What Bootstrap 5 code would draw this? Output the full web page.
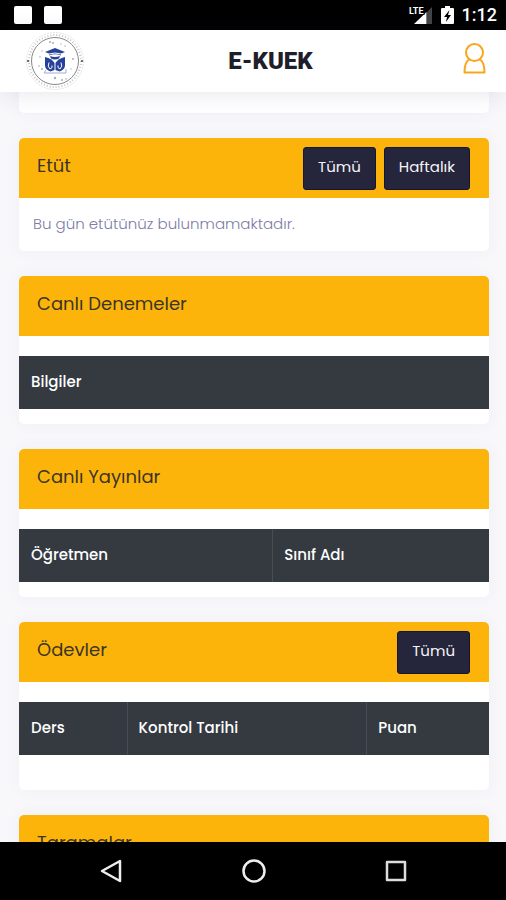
<!DOCTYPE html>
<html lang="tr">
<head>
<meta charset="utf-8">
<meta name="viewport" content="width=device-width, initial-scale=1">
<title>E-KUEK</title>
<link href="https://cdn.jsdelivr.net/npm/bootstrap@5.3.0/dist/css/bootstrap.min.css" rel="stylesheet">
<style>
  body { font-family: Poppins, Inter, "Noto Sans", sans-serif; background: #f8f8fb; color: #24243a; }
  .status-bar { height: 30px; padding: 0 9px 0 14px; font: 500 18px/30px Roboto, sans-serif; }
  .notice-square { width: 18px; height: 18px; border-radius: 2px; background: #fff; }
  .app-header { height: 62px; padding: 0 20px 0 25px; box-shadow: 0 2px 22px rgba(60, 60, 110, .12); z-index: 2; }
  .brand-title { font: 900 24px/30px Roboto, sans-serif; color: #1f1f2b; }
  .brand-slot { width: 90px; }
  .profile-slot { width: 60px; padding-bottom: 6px; }
  .feed { min-height: 0; padding: 0 17px 0 19px; gap: 25px; }
  .panel { border: 0; border-radius: 5px; flex-shrink: 0; box-shadow: 0 0 16px rgba(80, 80, 130, .05); }
  .panel-tail { height: 21px; border-radius: 0 0 5px 5px; }
  .panel-head { height: 60px; padding: 0 19px 0 18px; gap: 8px; border-radius: 5px 5px 0 0; background: #fcb40a; }
  .panel-title { font-size: 18px; line-height: 24px; font-weight: 400; color: #3b3527; padding-bottom: 4px; }
  .panel-note { padding: 13px 14px 15px; font-size: 15px; line-height: 25px; font-weight: 300; color: #7c7ca8; }
  .btn-ink { --bs-btn-color: #f4f4f8; --bs-btn-bg: #25253b; --bs-btn-border-color: #15162f; --bs-btn-hover-color: #fff; --bs-btn-hover-bg: #34344e;
    --bs-btn-padding-x: 14px; --bs-btn-font-size: 15px; --bs-btn-line-height: 23px; --bs-btn-border-radius: 3px; padding-top: 7px; padding-bottom: 11px; }
  .grid-block { padding: 20px 0 15px; }
  .grid-block.roomy { padding-bottom: 35px; }
  .grid-table { table-layout: fixed; }
  .grid-table th { height: 53px; padding: 0 11px 2px 12px; background: #343a40; color: #fff; font-size: 15px; line-height: 22px; font-weight: 500; border: 0; vertical-align: middle; }
  .grid-table th + th { border-left: 1px solid #454d55; padding-left: 11px; }
  .w-first { width: 54%; } .w-ders { width: 23%; } .w-date { width: 51%; }
  .system-nav { height: 58px; padding: 0 39px 0 41px; }
  .system-nav .btn { line-height: 0; }
</style>
<script src="https://cdn.jsdelivr.net/npm/bootstrap@5.3.0/dist/js/bootstrap.bundle.min.js"></script>
</head>
<body class="vh-100 d-flex flex-column overflow-hidden">

<div class="status-bar bg-black text-white d-flex align-items-center justify-content-between flex-shrink-0">
  <div class="d-flex gap-2">
    <span class="notice-square me-1"></span><span class="notice-square"></span>
  </div>
  <div class="d-flex align-items-center">
    <svg class="me-2" width="24" height="20" viewBox="0 0 24 20" role="img" aria-label="LTE">
      <path d="M23 2v17h-5V7z" fill="#444"/><path d="M5 19L17.500 7v12z" fill="#fff"/>
      <text x="0" y="9" font-family="Roboto" font-size="9" font-weight="700" fill="#fff" stroke="#000" stroke-width="2" paint-order="stroke">LTE</text>
    </svg>
    <svg class="me-2" width="13" height="20" viewBox="0 0 13 20" aria-hidden="true">
      <path d="M4 1h5v2h3q1 0 1 1v14q0 1-1 1H1q-1 0-1-1V4q0-1 1-1h3z" fill="#fff"/>
      <path d="M8.500 5L3 12h3l-1 5 5-7H7z" fill="#000"/>
    </svg>
    <span>1:12</span>
  </div>
</div>

<header class="app-header bg-white position-relative d-flex align-items-center justify-content-between flex-shrink-0">
  <a href="#" class="brand-slot d-flex" aria-label="Ana sayfa">
    <svg width="60" height="60" viewBox="0 0 60 60" aria-hidden="true">
      <g fill="none">
        <circle cx="30" cy="30" r="28.500" stroke="#e2e2e2" stroke-width="1" stroke-dasharray="2 1"/>
        <circle cx="30" cy="30" r="26" stroke="#c4c4c4" stroke-width="2" stroke-dasharray="1 2"/>
        <circle cx="30" cy="30" r="23.500" stroke="#888" stroke-width="1"/>
      </g>
      <g fill="#444"><circle cx="3" cy="30" r="1"/><circle cx="57" cy="30" r="1"/></g>
      <g fill="#a5abb8">
        <circle cx="25" cy="11" r="1"/><circle cx="28" cy="12" r="1"/><circle cx="36" cy="13" r=".7"/><circle cx="40" cy="15" r=".7"/>
        <circle cx="17" cy="20" r=".7"/><circle cx="15" cy="26" r=".8"/><circle cx="14" cy="35" r=".8"/><circle cx="17" cy="38" r="1"/>
        <circle cx="48" cy="28" r="1"/><circle cx="46" cy="38" r=".7"/><circle cx="30" cy="47" r="1.200"/><circle cx="37" cy="49" r="1"/><circle cx="41" cy="48" r=".8"/>
      </g>
      <g fill="#26419c">
        <path d="M30 17l10 4-4 1.500v2q-6-2.500-12 0v-2L20 21z"/>
        <path d="M25 25q5 2 10 0l-1 2.500q-4 2-8 0z"/>
        <path d="M20 26q7 1.500 9.500 6v7l-4 1.500q-5-1.500-5.500-6z"/>
        <path d="M40 26q-7 1.500-9.500 6v7l4 1.500q5-1.500 5.500-6z"/>
      </g>
      <g fill="none" stroke="#fff" stroke-width="1">
        <path d="M24 31.500q-2 4 1 6.500 3-1 2-3.500M36 31.500q2 4-1 6.500-3-1-2-3.500M24 23q6-2 12 0"/>
      </g>
      <path d="M19 42h22M21 39l-2 3M41 38v4" stroke="#a3accb" fill="none"/>
    </svg>
  </a>
  <h1 class="brand-title m-0">E-KUEK</h1>
  <div class="profile-slot d-flex justify-content-end">
    <button type="button" class="btn border-0 p-0 d-flex" aria-label="Profil">
      <svg width="23" height="31" viewBox="0 0 23 31" fill="none" stroke="#faa61a" stroke-width="2" stroke-linejoin="round" aria-hidden="true">
        <circle cx="11.500" cy="9.500" r="8.500"/>
        <path d="M6 16.500Q1.500 19.500 1.500 29.500h20q0-10-4.500-13"/>
      </svg>
    </button>
  </div>
</header>

<main class="feed d-flex flex-column flex-grow-1 overflow-hidden">
  <div class="card panel panel-tail"></div>

  <section class="card panel">
    <div class="panel-head d-flex align-items-center">
      <h2 class="panel-title m-0 me-auto">Etüt</h2>
      <button type="button" class="btn btn-ink">Tümü</button>
      <button type="button" class="btn btn-ink">Haftalık</button>
    </div>
    <p class="panel-note m-0">Bu gün etütünüz bulunmamaktadır.</p>
  </section>

  <section class="card panel">
    <div class="panel-head d-flex align-items-center"><h2 class="panel-title m-0">Canlı Denemeler</h2></div>
    <div class="grid-block">
      <table class="table grid-table m-0"><thead><tr><th scope="col">Bilgiler</th></tr></thead></table>
    </div>
  </section>

  <section class="card panel">
    <div class="panel-head d-flex align-items-center"><h2 class="panel-title m-0">Canlı Yayınlar</h2></div>
    <div class="grid-block">
      <table class="table grid-table m-0"><thead><tr><th scope="col" class="w-first">Öğretmen</th><th scope="col">Sınıf Adı</th></tr></thead></table>
    </div>
  </section>

  <section class="card panel">
    <div class="panel-head d-flex align-items-center">
      <h2 class="panel-title m-0 me-auto">Ödevler</h2>
      <button type="button" class="btn btn-ink">Tümü</button>
    </div>
    <div class="grid-block roomy">
      <table class="table grid-table m-0"><thead><tr><th scope="col" class="w-ders">Ders</th><th scope="col" class="w-date">Kontrol Tarihi</th><th scope="col">Puan</th></tr></thead></table>
    </div>
  </section>

  <section class="card panel">
    <div class="panel-head d-flex align-items-center"><h2 class="panel-title m-0">Taramalar</h2></div>
  </section>
</main>

<nav class="system-nav bg-black d-flex align-items-center justify-content-around flex-shrink-0" aria-label="Sistem">
  <button type="button" class="btn border-0 p-0" aria-label="Geri">
    <svg width="24" height="24" viewBox="0 0 24 24" fill="none" stroke="#eee" stroke-width="2.500" stroke-linejoin="round"><path d="M20 2v20L2 12z"/></svg>
  </button>
  <button type="button" class="btn border-0 p-0" aria-label="Ana ekran">
    <svg width="24" height="24" viewBox="0 0 24 24" fill="none" stroke="#eee" stroke-width="2.500"><circle cx="12" cy="12" r="10.500"/></svg>
  </button>
  <button type="button" class="btn border-0 p-0" aria-label="Son uygulamalar">
    <svg width="24" height="24" viewBox="0 0 24 24" fill="none" stroke="#ddd" stroke-width="2.500" stroke-linejoin="round"><path d="M3 3h18v18H3z"/></svg>
  </button>
</nav>
</body>
</html>
